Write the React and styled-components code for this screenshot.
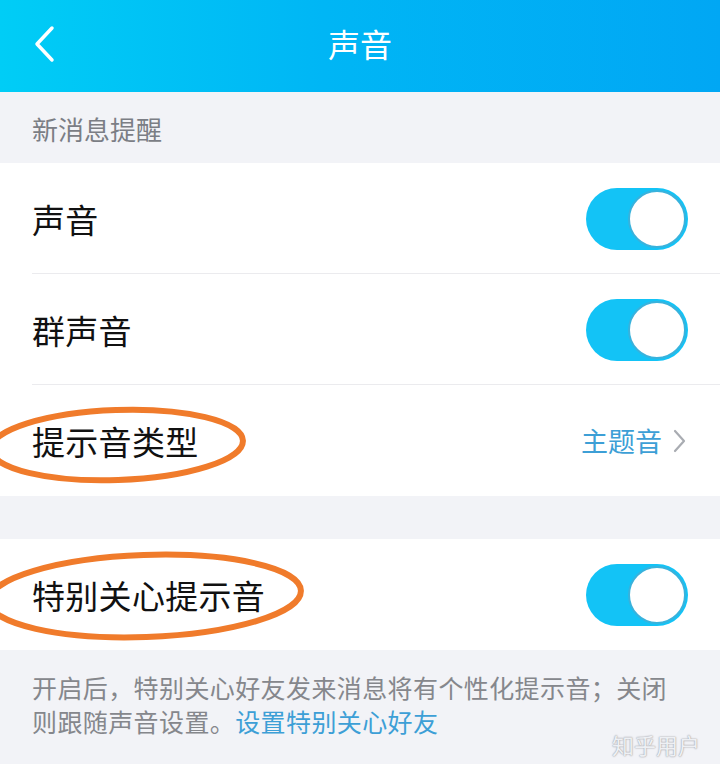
import React from "react";
import styled, { createGlobalStyle } from "styled-components";

const Global = createGlobalStyle`
  html, body {
    margin: 0;
    padding: 0;
    background: #f2f3f7;
  }
  body {
    font-family: "Noto Sans CJK SC", "Noto Sans", sans-serif;
  }
`;

const Toggle = ({ on = true }) => (
  <Track on={on}>
    <Thumb />
  </Track>
);

const Row = ({ label, children, divider, mark }) => (
  <RowWrap>
    <Label>{label}</Label>
    {children}
    {divider && <Divider />}
    {mark && (
      <Mark width={mark.w} height={mark.h} viewBox={`0 0 ${mark.w} ${mark.h}`} style={{ left: mark.x, top: mark.y }}>
        <ellipse
          cx={mark.w / 2}
          cy={mark.h / 2}
          rx={mark.w / 2 - 5}
          ry={mark.h / 2 - 5}
          fill="none"
          stroke="#f07b2b"
          strokeWidth="6"
          transform={`rotate(-2 ${mark.w / 2} ${mark.h / 2})`}
        />
      </Mark>
    )}
  </RowWrap>
);

const App = () => {
  return (
    <Page>
      <Global />
      <Header>
        <Back>
          <svg width="24" height="38" viewBox="0 0 24 38">
            <polyline points="20,3 5,19 20,35" fill="none" stroke="#fff" strokeWidth="3.5" strokeLinecap="round" strokeLinejoin="round" />
          </svg>
        </Back>
        <Title>声音</Title>
      </Header>
      <SectionTitle>新消息提醒</SectionTitle>
      <Group>
        <Row label="声音" divider>
          <Toggle />
        </Row>
        <Row label="群声音" divider>
          <Toggle />
        </Row>
        <Row label="提示音类型" mark={{ x: -14, y: 20, w: 262, h: 80 }}>
          <Value>
            主题音
            <svg width="14" height="24" viewBox="0 0 14 24">
              <polyline points="3,2 12,12 3,22" fill="none" stroke="#a9acb2" strokeWidth="2.2" strokeLinecap="round" strokeLinejoin="round" />
            </svg>
          </Value>
        </Row>
      </Group>
      <Gap />
      <Group>
        <Row label="特别关心提示音" mark={{ x: -16, y: 11, w: 322, h: 92 }}>
          <Toggle />
        </Row>
      </Group>
      <Footer>
        开启后，特别关心好友发来消息将有个性化提示音；关闭则跟随声音设置。<Link>设置特别关心好友</Link>
      </Footer>
      <Watermark>知乎用户</Watermark>
    </Page>
  );
};

export default App;

const Page = styled.div`
  position: relative;
  width: 720px;
  height: 764px;
  overflow: hidden;
  background: #f2f3f7;
`;
const Header = styled.div`
  height: 92px;
  display: flex;
  align-items: center;
  justify-content: center;
  position: relative;
  background: linear-gradient(90deg, #00cdf6 0%, #00b6f5 45%, #01a7f4 100%);
`;
const Back = styled.div`
  position: absolute;
  left: 32px;
  top: 25px;
  display: flex;
`;
const Title = styled.div`
  color: #fff;
  font-size: 32px;
  line-height: 1;
  margin-top: -6px;
`;
const SectionTitle = styled.div`
  height: 71px;
  display: flex;
  align-items: center;
  padding-left: 32px;
  font-size: 26px;
  color: #7b7e85;
  padding-top: 2px;
  box-sizing: border-box;
`;
const Group = styled.div`
  background: #fff;
`;
const RowWrap = styled.div`
  position: relative;
  height: 111px;
  display: flex;
  align-items: center;
  justify-content: space-between;
  padding: 0 32px 0 32px;
  box-sizing: border-box;
`;
const Label = styled.div`
  font-size: 33px;
  color: #111;
  position: relative;
  z-index: 1;
  letter-spacing: 0.3px;
`;
const Divider = styled.div`
  position: absolute;
  left: 32px;
  right: 0;
  bottom: 0;
  height: 1px;
  background: #ebebee;
`;
const Mark = styled.svg`
  position: absolute;
  z-index: 2;
  pointer-events: none;
`;
const Track = styled.div`
  width: 102px;
  height: 62px;
  border-radius: 31px;
  background: ${(p) => (p.on ? "#13c3f6" : "#e5e5ea")};
  display: flex;
  align-items: center;
  justify-content: ${(p) => (p.on ? "flex-end" : "flex-start")};
  padding: 2px;
  box-sizing: border-box;
`;
const Thumb = styled.div`
  width: 58px;
  height: 58px;
  border-radius: 50%;
  background: #fff;
  box-sizing: border-box;
  border: 2px solid #39b2dc;
`;
const Value = styled.div`
  display: flex;
  align-items: center;
  gap: 10px;
  font-size: 27px;
  color: #3d9fd6;
  margin-right: 2px;
`;
const Gap = styled.div`
  height: 43px;
`;
const Footer = styled.div`
  padding: 20px 40px 0 32px;
  font-size: 25px;
  line-height: 34px;
  color: #85878c;
  letter-spacing: 0.4px;
`;
const Link = styled.span`
  color: #3d9fd6;
`;
const Watermark = styled.div`
  position: absolute;
  right: 20px;
  bottom: 8px;
  font-size: 22px;
  line-height: 24px;
  color: #eef0f4;
  text-shadow: 0 0 2px #a8a8ad, 0 0 1px #9a9aa0;
`;
